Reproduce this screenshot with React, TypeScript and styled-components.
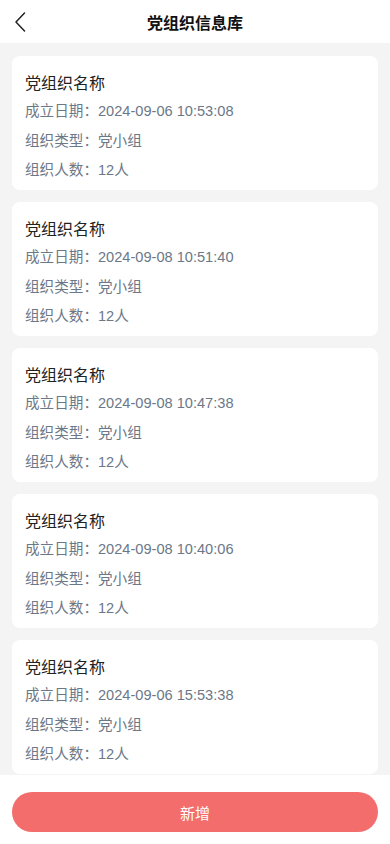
import React from "react";
import styled, { createGlobalStyle } from "styled-components";

const GlobalStyle = createGlobalStyle`
    html, body {
        margin: 0;
        padding: 0;
        height: 100%;
        background-color: #ffffff;
        font-family: "Liberation Sans", "Noto Sans CJK SC", sans-serif;
    }
    #root {
        height: 100%;
    }
`;

const Page = styled.div`
    height: 844px;
    display: flex;
    flex-direction: column;
    background-color: #ffffff;
`;

const Header = styled.div`
    height: 43px;
    flex-shrink: 0;
    display: flex;
    align-items: center;
    justify-content: center;
    position: relative;
    background-color: #ffffff;
`;

const BackButton = styled.div`
    position: absolute;
    left: 10px;
    top: 10px;
    width: 20px;
    height: 24px;
    display: flex;
    align-items: center;
    justify-content: center;
`;

const Title = styled.div`
    font-size: 16px;
    font-weight: 700;
    color: #111111;
`;

const List = styled.div`
    flex: 1;
    overflow: hidden;
    background-color: #f4f4f4;
    padding: 13px 12px 0 12px;
    display: flex;
    flex-direction: column;
    gap: 12px;
`;

const Card = styled.div`
    background-color: #ffffff;
    border-radius: 8px;
    padding: 16px 13px 4px 13px;
    height: 134px;
    box-sizing: border-box;
    flex-shrink: 0;
`;

const CardName = styled.div`
    font-size: 16px;
    line-height: 24px;
    color: #222222;
`;

const InfoLine = styled.div`
    font-size: 14.6px;
    line-height: 29.5px;
    color: #6b7888;
    padding-top: 1px;
    margin-bottom: -1px;
`;

const Footer = styled.div`
    flex-shrink: 0;
    height: 69px;
    background-color: #ffffff;
    padding: 17px 12px 0 12px;
    box-sizing: border-box;
`;

const AddButton = styled.button`
    width: 100%;
    height: 40px;
    border: 0;
    border-radius: 20px;
    background-color: #f46d6d;
    color: #ffffff;
    font-family: "Liberation Sans", "Noto Sans CJK SC", sans-serif;
    font-size: 15px;
    outline: none;
`;

type Org = {
    id: number;
    name: string;
    date: string;
    type: string;
    count: number;
};

const orgs: Org[] = [
    { id: 1, name: "党组织名称", date: "2024-09-06 10:53:08", type: "党小组", count: 12 },
    { id: 2, name: "党组织名称", date: "2024-09-08 10:51:40", type: "党小组", count: 12 },
    { id: 3, name: "党组织名称", date: "2024-09-08 10:47:38", type: "党小组", count: 12 },
    { id: 4, name: "党组织名称", date: "2024-09-08 10:40:06", type: "党小组", count: 12 },
    { id: 5, name: "党组织名称", date: "2024-09-06 15:53:38", type: "党小组", count: 12 },
];

function App() {
    return (
        <>
            <GlobalStyle />
            <Page>
                <Header>
                    <BackButton>
                        <svg width="12" height="20" viewBox="0 0 12 20" fill="none">
                            <path d="M10.5 1 L2 10 L10.5 19" stroke="#222" strokeWidth="1.5" strokeLinecap="round" strokeLinejoin="round" />
                        </svg>
                    </BackButton>
                    <Title>党组织信息库</Title>
                </Header>
                <List>
                    {orgs.map((org) => (
                        <Card key={org.id}>
                            <CardName>{org.name}</CardName>
                            <InfoLine>成立日期：{org.date}</InfoLine>
                            <InfoLine>组织类型：{org.type}</InfoLine>
                            <InfoLine>组织人数：{org.count}人</InfoLine>
                        </Card>
                    ))}
                </List>
                <Footer>
                    <AddButton>新增</AddButton>
                </Footer>
            </Page>
        </>
    );
}

export default App;
